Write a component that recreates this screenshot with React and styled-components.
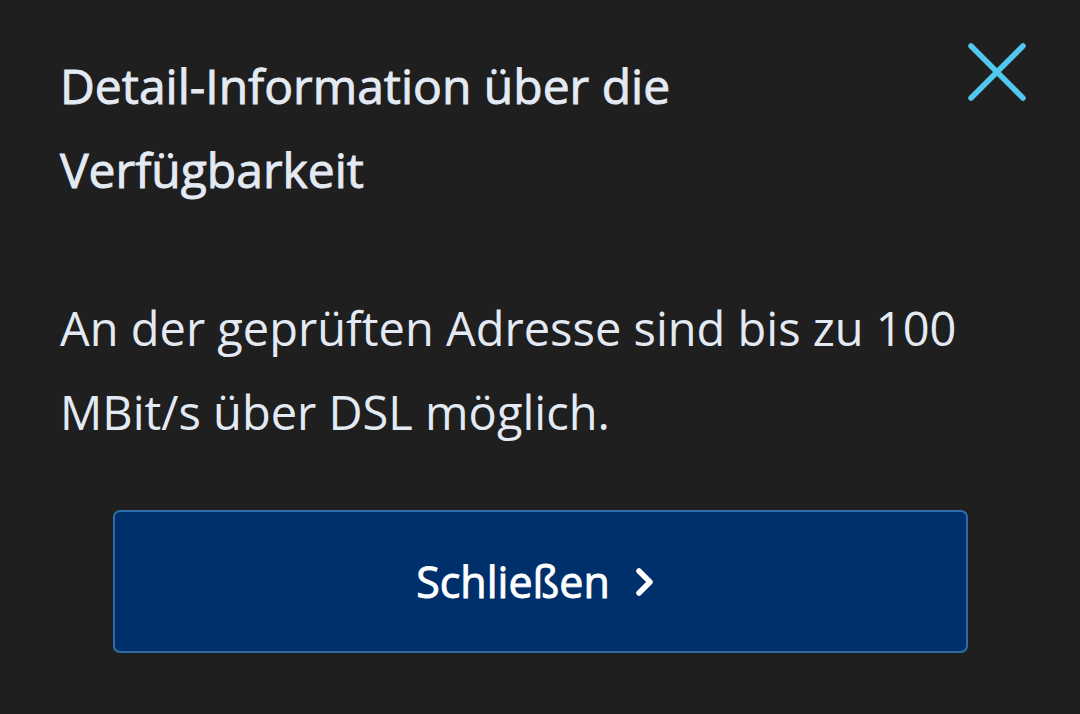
import React from "react";
import styled, { createGlobalStyle } from "styled-components";

const GlobalStyle = createGlobalStyle`
  html, body {
    margin: 0;
    padding: 0;
    background: #1f1f1f;
  }
  body {
    font-family: "Open Sans", "Liberation Sans", sans-serif;
  }
`;

const Sheet = styled.div`
  width: 1080px;
  height: 714px;
  box-sizing: border-box;
  background: #1f1f1f;
  padding: 44px 54px 0 60px;
  display: flex;
  flex-direction: column;
`;

const Header = styled.div`
  display: flex;
  justify-content: space-between;
  align-items: flex-start;
`;

// medium weight isn't installed, so a thin stroke thickens the regular cut
const Title = styled.h2`
  margin: 0;
  font-size: 48px;
  font-weight: 400;
  -webkit-text-stroke: 0.9px #e3eaf3;
  line-height: 84px;
  color: #e3eaf3;
  max-width: 700px;
`;

const CloseButton = styled.button`
  background: none;
  border: none;
  padding: 0;
  margin-top: -2px;
  width: 60px;
  height: 60px;
  cursor: pointer;
  display: flex;
  align-items: center;
  justify-content: center;
`;

const Body = styled.p`
  margin: 74px 0 0;
  font-size: 47px;
  font-weight: 400;
  line-height: 84px;
  color: #e3eaf3;
  max-width: 940px;
`;

const PrimaryButton = styled.button`
  margin: 56px 0 0 53px;
  width: 855px;
  height: 143px;
  box-sizing: border-box;
  background: #00306b;
  border: 2px solid #2c6da8;
  border-radius: 7px;
  color: #ffffff;
  -webkit-text-stroke: 0.9px #ffffff;
  font-family: inherit;
  font-size: 43px;
  font-weight: 400;
  display: flex;
  align-items: center;
  justify-content: center;
  gap: 25px;
  padding: 0 10px 0 0;
  cursor: pointer;
`;

const CloseIcon = () => (
  <svg width="60" height="60" viewBox="0 0 60 60">
    <path
      d="M5 4 L57 56 M57 4 L5 56"
      stroke="#52c8ef"
      strokeWidth="5.5"
      strokeLinecap="round"
      fill="none"
    />
  </svg>
);

const Chevron = () => (
  <svg width="20" height="30" viewBox="0 0 20 30">
    <path
      d="M4 4 L15 15 L4 26"
      stroke="#ffffff"
      strokeWidth="5.5"
      strokeLinecap="round"
      strokeLinejoin="round"
      fill="none"
    />
  </svg>
);

export default function App() {
  return (
    <>
      <GlobalStyle />
      <Sheet>
        <Header>
          <Title>Detail-Information über die Verfügbarkeit</Title>
          <CloseButton aria-label="Schließen">
            <CloseIcon />
          </CloseButton>
        </Header>
        <Body>
          An der geprüften Adresse sind bis zu 100 MBit/s über DSL möglich.
        </Body>
        <PrimaryButton>
          Schließen
          <Chevron />
        </PrimaryButton>
      </Sheet>
    </>
  );
}
